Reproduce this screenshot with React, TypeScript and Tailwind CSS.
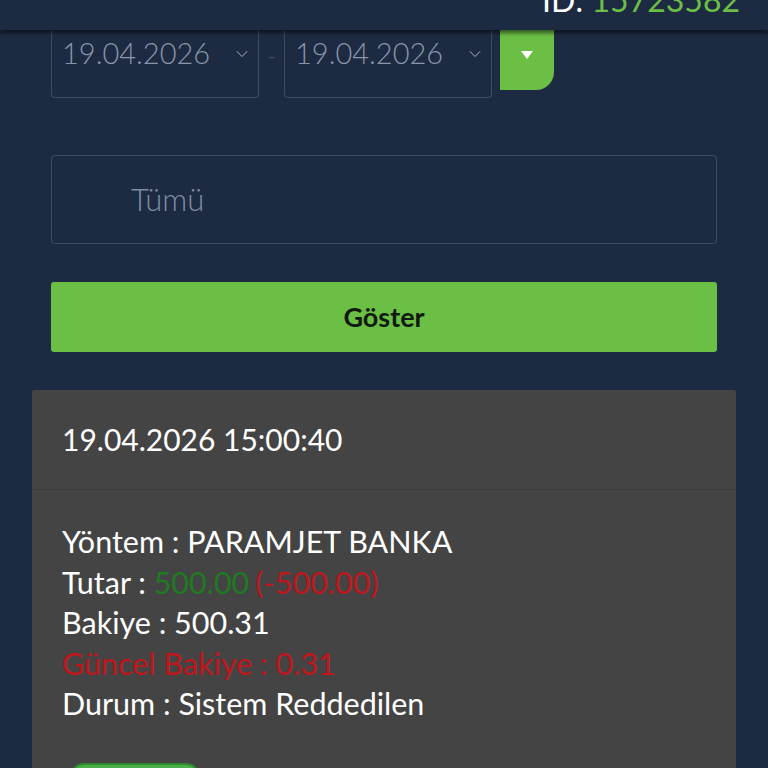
import { ChevronDown } from "lucide-react";

const font = { fontFamily: "Lato, 'Liberation Sans', sans-serif" };

function DateBox({ value }: { value: string }) {
  return (
    <div className="flex h-[68px] w-[208px] items-start justify-between rounded-b border-x border-b border-[#3e4c64] pl-[10px] pr-[6px] pt-[4px]">
      <span className="text-[29px] font-light leading-[38px] text-[#8895aa]">{value}</span>
      <ChevronDown className="mt-[10px] h-[20px] w-[20px] text-[#8895aa]" strokeWidth={1.25} />
    </div>
  );
}

export default function App() {
  return (
    <div className="h-[768px] w-[768px] overflow-hidden bg-[#1d2b42]" style={font}>
      <div className="relative z-10 flex h-[30px] items-end justify-end overflow-hidden bg-[#1d2b42] pr-[28px] shadow-[0_3px_4px_rgba(0,0,0,0.55)]">
        <div className="mb-[14px] text-[32px] leading-[32px]">
          <span className="text-white">ID: </span>
          <span className="text-[#6cbf45]">15723582</span>
        </div>
      </div>

      <div className="px-[51px]">
        <div className="flex items-start">
          <DateBox value="19.04.2026" />
          <span className="w-[25px] pt-[10px] text-center text-[20px] text-[#3e4c64]">-</span>
          <DateBox value="19.04.2026" />
          <button className="ml-[8px] flex h-[60px] w-[54px] items-start justify-center rounded-br-[18px] bg-[#6cbf45] pt-[20px]">
            <svg width="14" height="10" viewBox="0 0 14 10">
              <path d="M1 1h12L7 9z" fill="#ffffff" />
            </svg>
          </button>
        </div>

        <div className="mt-[57px] flex h-[89px] items-center rounded border border-[#3e4c64] pl-[79px]">
          <span className="text-[31px] font-light text-[#7f8ca2]">Tümü</span>
        </div>

        <button className="mt-[38px] flex h-[70px] w-full items-center justify-center rounded-[3px] bg-[#6cbf45] text-[27px] font-bold text-[#0f1a0f]">
          Göster
        </button>
      </div>

      <div className="mx-[32px] mt-[38px] rounded-t-[2px] bg-[#444444]">
        <div className="flex h-[100px] items-center border-b border-[#3b3b3b] px-[30px]">
          <span className="text-[30px] text-white">19.04.2026 15:00:40</span>
        </div>
        <div className="px-[30px] pt-[31px] text-[30.5px] leading-[40.5px] text-white">
          <div>Yöntem : PARAMJET BANKA</div>
          <div>
            Tutar : <span className="text-[#1f7a22]">500.00</span>
            <span className="ml-[6px] text-[#c0161c]">(-500.00)</span>
          </div>
          <div>Bakiye : 500.31</div>
          <div className="text-[#c0161c]">Güncel Bakiye : 0.31</div>
          <div>Durum : Sistem Reddedilen</div>
          <div className="ml-[8px] mt-[39px] h-[40px] w-[130px] rounded-[14px] border-2 border-[#2f8a2f] bg-[#49b04a]" />
        </div>
      </div>
    </div>
  );
}
